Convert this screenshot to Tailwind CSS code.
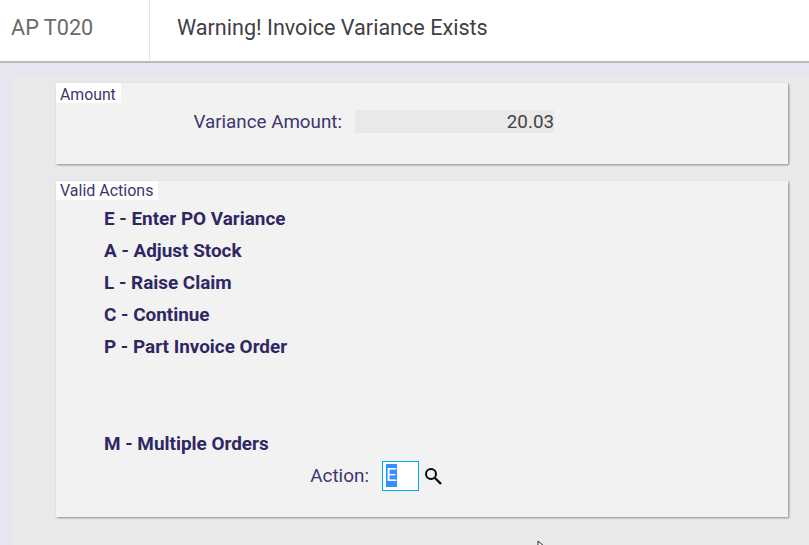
<!DOCTYPE html>
<html lang="en">
<head>
    <meta charset="UTF-8">
    <title>AP T020</title>
    <script src="https://cdn.jsdelivr.net/npm/@tailwindcss/browser@4"></script>
</head>
<body class="w-[809px] h-[545px] overflow-hidden bg-[#e6e6f0] font-['Roboto',sans-serif] relative">
    <!-- header -->
    <header class="h-[63px] bg-white flex border-b-2 border-[#b9b9bd]">
        <div class="w-[150px] h-[60px] pl-[11px] flex items-center text-[21.7px] text-[#6b6b6b] border-r border-[#e4e4e4] pb-[4px]">AP T020</div>
        <div class="pl-[27px] flex items-center text-[21.6px] text-[#3f3f46] pb-[4px]">Warning! Invoice Variance Exists</div>
    </header>

    <main class="ml-[12px] mt-[12px] h-[470px] bg-[#e9e9e9] pl-[44px] pr-[21px] pt-[8px]">
        <section class="relative h-[81px] bg-[#f2f2f2] shadow-[1px_1px_2px_rgba(0,0,0,0.4)]">
            <div class="absolute left-0 top-0 h-[20px] w-[65px] bg-white pl-[4px] pt-[2px] text-[15.8px] leading-[19px] text-[#3e3570]">Amount</div>
            <div class="flex items-start pt-[27px]">
                <label class="w-[286px] pt-[1px] text-right text-[18.8px] leading-[23px] text-[#3e3570]">Variance Amount:</label>
                <div class="ml-[13px] w-[199px] h-[23px] bg-[#e9e9e9] pt-[1px] text-right text-[18.8px] leading-[23px] text-[#444]">20.03</div>
            </div>
        </section>

        <section class="relative mt-[17px] h-[336px] bg-[#f2f2f2] shadow-[1px_1px_2px_rgba(0,0,0,0.4)]">
            <div class="absolute left-0 top-0 h-[19px] w-[102px] bg-white pl-[4px] text-[16px] leading-[19px] text-[#3e3570]">Valid Actions</div>
            <ul class="pl-[48px] pt-[22px] text-[18.9px] font-bold leading-[32px] text-[#2f2763]">
                <li>E - Enter PO Variance</li>
                <li>A - Adjust Stock</li>
                <li>L - Raise Claim</li>
                <li>C - Continue</li>
                <li>P - Part Invoice Order</li>
                <li class="mt-[65px]">M - Multiple Orders</li>
            </ul>
            <div class="flex items-center mt-[1px]">
                <label class="w-[313px] text-right text-[18.9px] leading-[30px] text-[#3e3570]">Action:</label>
                <div class="ml-[13px] w-[37px] h-[30px] bg-white border border-[#00a8f0] pl-[3px] pt-[2px] text-[18.8px] leading-[23px]"><span class="inline-block w-[11px] bg-[#3390ff] text-white">E</span></div>
                <svg class="ml-[4px]" width="20" height="20" viewBox="0 0 20 20" fill="none" stroke="#0a0a0a" stroke-width="2"><circle cx="8" cy="8" r="5"/><path d="M12 12l6 6" stroke-width="2.4"/></svg>
            </div>
        </section>
    </main>

    <!-- mouse cursor -->
    <svg class="absolute left-[537px] top-[540px]" width="9" height="12" viewBox="0 0 9 12" fill="#fff" stroke="#222" stroke-width="1"><path d="M1 1v9l2.5-2.2L8 7z"/></svg>
</body>
</html>
